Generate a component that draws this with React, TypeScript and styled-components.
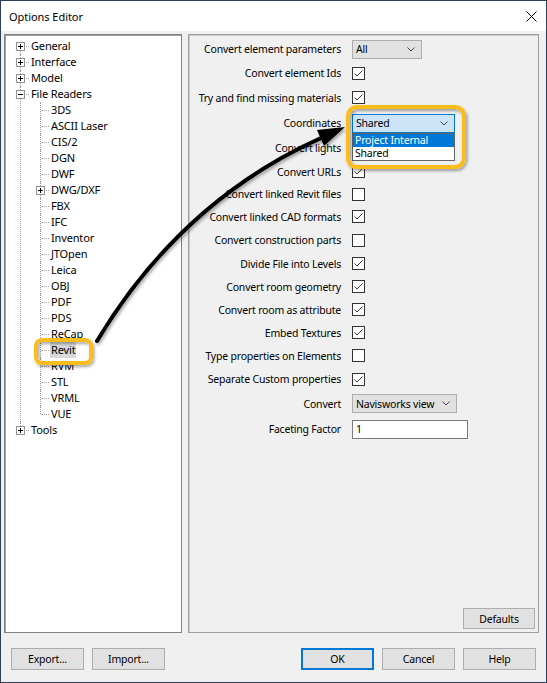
import React from "react";
import styled, { createGlobalStyle, css } from "styled-components";

const GlobalStyle = createGlobalStyle`
  html, body {
    margin: 0;
    padding: 0;
    background: #ffffff;
  }
  body {
    font-family: "Noto Sans", "Segoe UI", "Liberation Sans", sans-serif;
    font-size: 10.5px;
    letter-spacing: -0.2px;
    color: #000;
  }
  * {
    box-sizing: border-box;
  }
`;

// 창 틀
const Window = styled.div`
  position: relative;
  width: 547px;
  height: 683px;
  border: 1px solid #2e3d5a;
  background: #f0f0f0;
  display: flex;
  flex-direction: column;
  overflow: hidden;
`;

const TitleBar = styled.div`
  height: 30px;
  background: #ffffff;
  display: flex;
  align-items: center;
  justify-content: space-between;
  padding-left: 8px;
`;

const Title = styled.span`
  font-size: 11px;
  letter-spacing: -0.05px;
`;

const CloseButton = styled.div`
  width: 30px;
  height: 30px;
  display: flex;
  align-items: center;
  justify-content: center;
`;

const Body = styled.div`
  flex: 1;
  display: flex;
  flex-direction: column;
  padding: 3px 7px 0 3px;
`;

const Panels = styled.div`
  height: 599px;
  display: flex;
  gap: 6px;
`;

const TreePanel = styled.div`
  width: 178px;
  background: #ffffff;
  border: 1px solid #828282;
  box-shadow: inset 1px 1px 0 #a0a0a0;
  padding-top: 3px;
  overflow: hidden;
  font-size: 11px;
  letter-spacing: -0.15px;
`;

const OptionsPanel = styled.div`
  flex: 1;
  border: 1px solid #a0a0a0;
  box-shadow: inset 1px 1px 0 #c8c8c8;
  display: flex;
  flex-direction: column;
  padding-top: 2px;
`;

// 트리
const lineX = (level: number) => 15 + level * 20;
const textX = (level: number) => 26 + level * 20;

const TreeList = styled.ul`
  list-style: none;
  margin: 0;
  padding: 0;
`;

const TreeItem = styled.li<{ $level: number; $top: number; $last: boolean }>`
  position: relative;

  &::before {
    content: "";
    position: absolute;
    left: ${(p) => lineX(p.$level)}px;
    top: ${(p) => p.$top}px;
    height: ${(p) => (p.$last ? `${8 - p.$top}px` : `calc(100% - ${p.$top}px)`)};
    border-left: 1px dotted #a0a0a0;
  }
`;

const TreeRow = styled.div<{ $level: number }>`
  position: relative;
  height: 16px;
  line-height: 16px;
  padding-left: ${(p) => textX(p.$level) - 1}px;
  white-space: nowrap;

  &::before {
    content: "";
    position: absolute;
    left: ${(p) => lineX(p.$level) + 1}px;
    top: 8px;
    width: 8px;
    border-top: 1px dotted #a0a0a0;
  }
`;

const Expander = styled.span<{ $level: number }>`
  position: absolute;
  z-index: 1;
  left: ${(p) => lineX(p.$level) - 4}px;
  top: 4px;
  width: 9px;
  height: 9px;
  display: block;
  line-height: 0;
`;

const NodeLabel = styled.span<{ $selected?: boolean }>`
  display: inline-block;
  height: 16px;
  padding: 0 1px;
  ${(p) =>
    p.$selected &&
    css`
      background: #d9d9d9;
    `}
`;

// 옵션 폼
const Form = styled.div`
  display: flex;
  flex-direction: column;
`;

const FieldRow = styled.div<{ $h: number }>`
  height: ${(p) => p.$h}px;
  display: grid;
  grid-template-columns: 152px 1fr;
  column-gap: 11px;
  align-items: center;
`;

const FieldLabel = styled.span`
  text-align: right;
  white-space: nowrap;
`;

const ControlCell = styled.div`
  position: relative;
  display: flex;
  align-items: center;
`;

const CheckBox = styled.span`
  width: 13px;
  height: 13px;
  border: 1px solid #333333;
  background: #ffffff;
  display: flex;
  align-items: center;
  justify-content: center;
`;

const Select = styled.div<{ $width: number; $focused?: boolean }>`
  width: ${(p) => p.$width}px;
  height: 19px;
  border: 1px solid ${(p) => (p.$focused ? "#0078d7" : "#adadad")};
  background: ${(p) => (p.$focused ? "#cce4f7" : "#e1e1e1")};
  display: flex;
  align-items: center;
  justify-content: space-between;
  padding: 0 6px 0 3px;
  white-space: nowrap;
`;

const DropList = styled.div`
  position: absolute;
  z-index: 2;
  top: 100%;
  left: 0;
  width: 103px;
  background: #ffffff;
  border: 1px solid #646464;
`;

const DropItem = styled.div<{ $active?: boolean }>`
  height: 13px;
  line-height: 13px;
  padding-left: 2px;
  white-space: nowrap;
  background: ${(p) => (p.$active ? "#0078d7" : "#ffffff")};
  color: ${(p) => (p.$active ? "#ffffff" : "#000000")};
`;

const TextInput = styled.input`
  width: 116px;
  height: 19px;
  border: 1px solid #7a7a7a;
  background: #ffffff;
  padding: 0 0 0 3px;
  font: inherit;
  letter-spacing: inherit;
  color: #000;
  outline: none;
`;

const Spacer = styled.div`
  flex: 1;
`;

const Button = styled.button<{ $primary?: boolean; $width?: number }>`
  width: ${(p) => p.$width ?? 73}px;
  height: 22px;
  background: #e1e1e1;
  border: ${(p) => (p.$primary ? "2px solid #0078d7" : "1px solid #adadad")};
  font: inherit;
  letter-spacing: inherit;
  color: #000;
  padding: 0;
`;

const DefaultsButton = styled(Button)`
  align-self: flex-end;
  height: 21px;
  margin: 0 3px 3px 0;
`;

const Footer = styled.div`
  display: flex;
  align-items: center;
  padding: 15px 3px 0 7px;
`;

const ButtonGroup = styled.div<{ $push?: boolean }>`
  display: flex;
  gap: 8px;
  ${(p) =>
    p.$push &&
    css`
      margin-left: auto;
    `}
`;

// 주석(노란 박스, 화살표)
const Annotations = styled.svg`
  position: absolute;
  top: 0;
  left: 0;
  pointer-events: none;
  z-index: 5;
`;

type TreeNodeData = {
  label: string;
  expandable?: boolean;
  open?: boolean;
  selected?: boolean;
  children?: TreeNodeData[];
};

const readers = [
  "3DS",
  "ASCII Laser",
  "CIS/2",
  "DGN",
  "DWF",
  "DWG/DXF",
  "FBX",
  "IFC",
  "Inventor",
  "JTOpen",
  "Leica",
  "OBJ",
  "PDF",
  "PDS",
  "ReCap",
  "Revit",
  "RVM",
  "STL",
  "VRML",
  "VUE",
];

const tree: TreeNodeData[] = [
  { label: "General", expandable: true },
  { label: "Interface", expandable: true },
  { label: "Model", expandable: true },
  {
    label: "File Readers",
    expandable: true,
    open: true,
    children: readers.map((r) => ({
      label: r,
      expandable: r === "DWG/DXF",
      selected: r === "Revit",
    })),
  },
  { label: "Tools", expandable: true },
];

type Field =
  | { label: string; kind: "check"; checked: boolean; h: number }
  | { label: string; kind: "select"; value: string; width: number; h: number; focused?: boolean; options?: string[] }
  | { label: string; kind: "text"; value: string; h: number };

const fields: Field[] = [
  { label: "Convert element parameters", kind: "select", value: "All", width: 70, h: 24 },
  { label: "Convert element Ids", kind: "check", checked: true, h: 24 },
  { label: "Try and find missing materials", kind: "check", checked: true, h: 25 },
  {
    label: "Coordinates",
    kind: "select",
    value: "Shared",
    width: 103,
    h: 26,
    focused: true,
    options: ["Project Internal", "Shared"],
  },
  { label: "Convert lights", kind: "check", checked: true, h: 24 },
  { label: "Convert URLs", kind: "check", checked: true, h: 23 },
  { label: "Convert linked Revit files", kind: "check", checked: false, h: 22 },
  { label: "Convert linked CAD formats", kind: "check", checked: true, h: 23 },
  { label: "Convert construction parts", kind: "check", checked: false, h: 24 },
  { label: "Divide File into Levels", kind: "check", checked: true, h: 23 },
  { label: "Convert room geometry", kind: "check", checked: true, h: 23 },
  { label: "Convert room as attribute", kind: "check", checked: true, h: 23 },
  { label: "Embed Textures", kind: "check", checked: true, h: 23 },
  { label: "Type properties on Elements", kind: "check", checked: false, h: 23 },
  { label: "Separate Custom properties", kind: "check", checked: true, h: 24 },
  { label: "Convert", kind: "select", value: "Navisworks view", width: 105, h: 25 },
  { label: "Faceting Factor", kind: "text", value: "1", h: 26 },
];

const Chevron = () => (
  <svg width="8" height="5" viewBox="0 0 8 5">
    <path d="M0.5 0.5 L4 4 L7.5 0.5" fill="none" stroke="#444" strokeWidth="1" />
  </svg>
);

const CheckMark = () => (
  <svg width="11" height="11" viewBox="0 0 11 11">
    <path d="M1.5 5.5 L4 8 L9.5 2.5" fill="none" stroke="#3a3a3a" strokeWidth="1" />
  </svg>
);

const ExpandBox = ({ open }: { open?: boolean }) => (
  <svg width="9" height="9" viewBox="0 0 9 9">
    <rect x="0.5" y="0.5" width="8" height="8" fill="#fff" stroke="#919191" />
    <path d="M2 4.5 H7" stroke="#000" strokeWidth="1" />
    {!open && <path d="M4.5 2 V7" stroke="#000" strokeWidth="1" />}
  </svg>
);

const TreeNode: React.FC<{ node: TreeNodeData; level: number; first: boolean; last: boolean }> = ({
  node,
  level,
  first,
  last,
}) => (
  <TreeItem $level={level} $top={first && level === 0 ? 8 : 0} $last={last}>
    <TreeRow $level={level}>
      {node.expandable && (
        <Expander $level={level}>
          <ExpandBox open={node.open} />
        </Expander>
      )}
      <NodeLabel $selected={node.selected}>{node.label}</NodeLabel>
    </TreeRow>
    {node.open && node.children && (
      <TreeList>
        {node.children.map((child, i) => (
          <TreeNode
            key={child.label}
            node={child}
            level={level + 1}
            first={i === 0}
            last={i === node.children!.length - 1}
          />
        ))}
      </TreeList>
    )}
  </TreeItem>
);

const renderControl = (f: Field) => {
  if (f.kind === "check") {
    return <CheckBox>{f.checked && <CheckMark />}</CheckBox>;
  }
  if (f.kind === "text") {
    return <TextInput value={f.value} readOnly />;
  }
  return (
    <>
      <Select $width={f.width} $focused={f.focused}>
        <span>{f.value}</span>
        <Chevron />
      </Select>
      {f.options && (
        <DropList>
          {f.options.map((o, i) => (
            <DropItem key={o} $active={i === 0}>
              {o}
            </DropItem>
          ))}
        </DropList>
      )}
    </>
  );
};

const App: React.FC = () => {
  return (
    <>
      <GlobalStyle />
      <Window>
        <TitleBar>
          <Title>Options Editor</Title>
          <CloseButton>
            <svg width="11" height="11" viewBox="0 0 11 11">
              <path d="M0.5 0.5 L10.5 10.5 M10.5 0.5 L0.5 10.5" stroke="#000" strokeWidth="1" />
            </svg>
          </CloseButton>
        </TitleBar>
        <Body>
          <Panels>
            <TreePanel>
              <TreeList>
                {tree.map((node, i) => (
                  <TreeNode
                    key={node.label}
                    node={node}
                    level={0}
                    first={i === 0}
                    last={i === tree.length - 1}
                  />
                ))}
              </TreeList>
            </TreePanel>
            <OptionsPanel>
              <Form>
                {fields.map((f) => (
                  <FieldRow key={f.label} $h={f.h}>
                    <FieldLabel>{f.label}</FieldLabel>
                    <ControlCell>{renderControl(f)}</ControlCell>
                  </FieldRow>
                ))}
              </Form>
              <Spacer />
              <DefaultsButton $width={72}>Defaults</DefaultsButton>
            </OptionsPanel>
          </Panels>
          <Footer>
            <ButtonGroup>
              <Button>Export...</Button>
              <Button>Import...</Button>
            </ButtonGroup>
            <ButtonGroup $push>
              <Button $primary>OK</Button>
              <Button>Cancel</Button>
              <Button>Help</Button>
            </ButtonGroup>
          </Footer>
        </Body>

        <Annotations width="547" height="683" viewBox="0 0 547 683">
          <defs>
            <filter id="shadow" x="-20%" y="-20%" width="140%" height="140%">
              <feDropShadow dx="1.5" dy="2" stdDeviation="1.8" floodColor="#000" floodOpacity="0.35" />
            </filter>
          </defs>
          <g filter="url(#shadow)">
            <rect x="35" y="339" width="55" height="23" rx="6" fill="none" stroke="#fbbd1f" strokeWidth="4" />
            <rect x="347" y="106" width="116" height="60" rx="9" fill="none" stroke="#fbbd1f" strokeWidth="4" />
            <path d="M96 340 Q 180 200 320 137" fill="none" stroke="#000" strokeWidth="4" strokeLinecap="round" />
            <polygon points="344,126 323,145 316,129" fill="#000" />
          </g>
        </Annotations>
      </Window>
    </>
  );
};

export default App;
